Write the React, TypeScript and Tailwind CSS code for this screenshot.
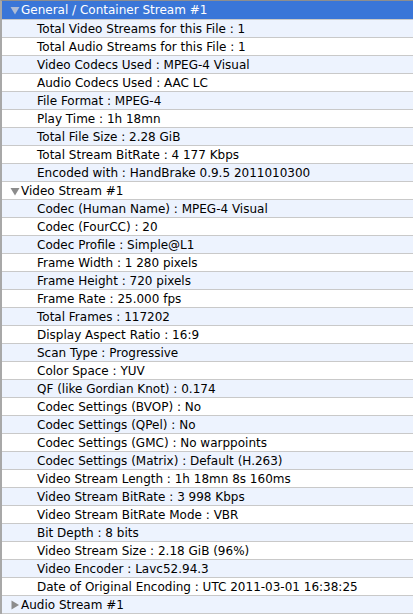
import React from 'react';

type Section = {
  title: string;
  open: boolean;
  items: string[];
};

const sections: Section[] = [
  {
    title: 'General / Container Stream #1',
    open: true,
    items: [
      'Total Video Streams for this File : 1',
      'Total Audio Streams for this File : 1',
      'Video Codecs Used : MPEG-4 Visual',
      'Audio Codecs Used : AAC LC',
      'File Format : MPEG-4',
      'Play Time : 1h 18mn',
      'Total File Size : 2.28 GiB',
      'Total Stream BitRate : 4 177 Kbps',
      'Encoded with : HandBrake 0.9.5 2011010300',
    ],
  },
  {
    title: 'Video Stream #1',
    open: true,
    items: [
      'Codec (Human Name) : MPEG-4 Visual',
      'Codec (FourCC) : 20',
      'Codec Profile : Simple@L1',
      'Frame Width : 1 280 pixels',
      'Frame Height : 720 pixels',
      'Frame Rate : 25.000 fps',
      'Total Frames : 117202',
      'Display Aspect Ratio : 16:9',
      'Scan Type : Progressive',
      'Color Space : YUV',
      'QF (like Gordian Knot) : 0.174',
      'Codec Settings (BVOP) : No',
      'Codec Settings (QPel) : No',
      'Codec Settings (GMC) : No warppoints',
      'Codec Settings (Matrix) : Default (H.263)',
      'Video Stream Length : 1h 18mn 8s 160ms',
      'Video Stream BitRate : 3 998 Kbps',
      'Video Stream BitRate Mode : VBR',
      'Bit Depth : 8 bits',
      'Video Stream Size : 2.18 GiB (96%)',
      'Video Encoder : Lavc52.94.3',
      'Date of Original Encoding : UTC 2011-03-01 16:38:25',
    ],
  },
  { title: 'Audio Stream #1', open: false, items: [] },
];

// disclosure triangle, pointing down when the group is expanded
const Disclosure = ({ open, selected }: { open: boolean; selected: boolean }) => (
  <svg width="10" height="10" viewBox="0 0 10 10" className="shrink-0">
    {open ? (
      <polygon points="0.5,2 9.5,2 5,9.5" fill={selected ? '#aebcd6' : '#8c8c8c'} />
    ) : (
      <polygon points="1.5,0.5 9,5 1.5,9.5" fill="#8c8c8c" />
    )}
  </svg>
);

type Row = { text: string; header: boolean; open: boolean };

const App: React.FC = () => {
  const rows: Row[] = [];
  sections.forEach((s) => {
    rows.push({ text: s.title, header: true, open: s.open });
    if (s.open) s.items.forEach((t) => rows.push({ text: t, header: false, open: false }));
  });

  return (
    <div
      className="w-[413px] h-[614px] overflow-hidden bg-white border-t border-[#8e8e8e] border-l-2 border-l-[#a8a8a8] text-[12px] text-black"
      style={{ fontFamily: '"DejaVu Sans", Verdana, sans-serif' }}
    >
      {rows.map((row, i) => {
        const selected = i === 0;
        const bg = selected ? 'bg-[#3a76d8] text-white' : i % 2 === 1 ? 'bg-[#edf3fe]' : 'bg-white';
        return (
          <div
            key={i}
            className={`flex items-center border-b border-[#c9c9c9] whitespace-nowrap ${selected ? 'h-[19px]' : 'h-[18px]'} ${bg}`}
          >
            {row.header ? (
              <div className="flex items-center pl-[8px] gap-[1px]">
                <Disclosure open={row.open} selected={selected} />
                <span>{row.text}</span>
              </div>
            ) : (
              <span className="pl-[35px]">{row.text}</span>
            )}
          </div>
        );
      })}
    </div>
  );
};

export default App;
